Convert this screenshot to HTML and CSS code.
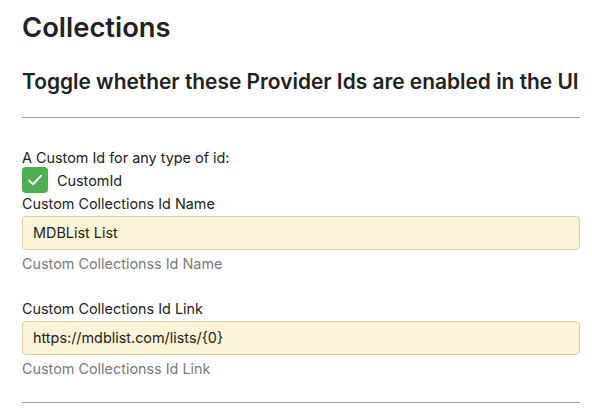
FILE: index.html
```html
<!DOCTYPE html>
<html>
<head>
<meta charset="utf-8">
<link rel="stylesheet" href="styles.css">
</head>
<body>
<div class="page">
  <h1 class="title">Collections</h1>
  <h2 class="subtitle">Toggle whether these Provider Ids are enabled in the UI</h2>
  <hr class="rule">
  <div class="section">
    <div class="label">A Custom Id for any type of id:</div>
    <label class="check-row">
      <span class="checkbox">
        <svg width="18" height="18" viewBox="0 0 18 18"><path d="M3 9.5 L7 13.3 L15 4.8" fill="none" stroke="#fff" stroke-width="2" stroke-linecap="round" stroke-linejoin="round"/></svg>
      </span>
      <span class="check-text">CustomId</span>
    </label>
    <div class="field">
      <div class="label">Custom Collections Id Name</div>
      <div class="input">MDBList List</div>
      <div class="help">Custom Collectionss Id Name</div>
    </div>
    <div class="field field-2">
      <div class="label">Custom Collections Id Link</div>
      <div class="input">https://mdblist.com/lists/{0}</div>
      <div class="help">Custom Collectionss Id Link</div>
    </div>
  </div>
  <hr class="rule rule-bottom">
</div>
</body>
</html>
```
FILE: styles.css
```css
html, body {
  margin: 0;
  padding: 0;
  background: #fff;
}
body {
  font-family: Inter, "Noto Sans", sans-serif;
  color: #222;
}
.page {
  padding: 0 12px 0 22px;
  width: 558px;
}
.title {
  margin: 0;
  padding-top: 10px;
  font-size: 27.4px;
  font-weight: 600;
  line-height: 34px;
}
.subtitle {
  margin: 25px 0 0 0;
  font-size: 20.9px;
  font-weight: 600;
  line-height: 26px;
  white-space: nowrap;
}
.rule {
  margin: 22px 0 0 0;
  border: 0;
  border-top: 1px solid #a0a0a0;
  height: 0;
}
.section {
  padding-top: 31px;
}
.label {
  font-size: 14.4px;
  line-height: 18px;
  color: #222;
}
.check-row {
  display: flex;
  align-items: center;
  gap: 9px;
  height: 26px;
}
.checkbox {
  width: 26px;
  height: 26px;
  border-radius: 4px;
  background: #4caf50;
  display: flex;
  align-items: center;
  justify-content: center;
}
.check-text {
  font-size: 14.4px;
  color: #222;
}
.field {
  margin-top: 2px;
}
.field-2 {
  margin-top: 27px;
}
.input {
  margin-top: 3px;
  height: 32px;
  box-sizing: content-box;
  border: 1px solid #d8cfa6;
  border-radius: 4px;
  background: #fcf4d8;
  padding: 0 10px;
  font-size: 14.4px;
  line-height: 32px;
  color: #222;
}
.help {
  margin-top: 5px;
  font-size: 14.4px;
  line-height: 18px;
  color: #7a7a7a;
}
.rule-bottom {
  margin-top: 24px;
}
```
